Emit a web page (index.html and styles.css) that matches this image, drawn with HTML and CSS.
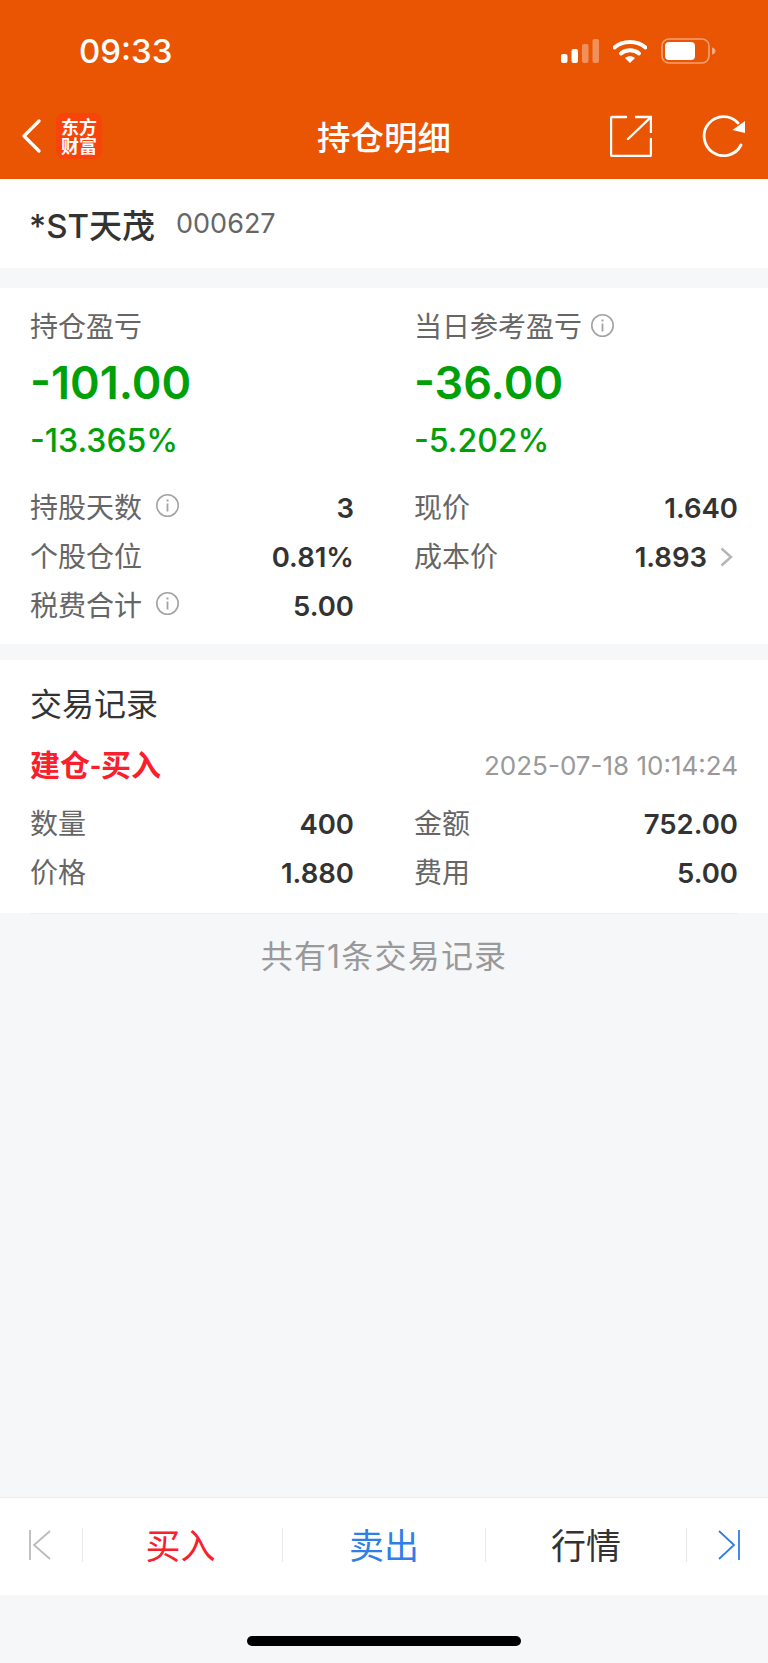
FILE: index.html
```html
<!DOCTYPE html>
<html lang="zh-CN">
<head>
    <meta charset="UTF-8">
    <meta name="viewport" content="width=device-width, initial-scale=1.0">
    <title>持仓明细</title>
    <link rel="stylesheet" href="styles.css">
</head>
<body>
    <div id="app">
        <!-- Header -->
        <header class="topbar">
            <div class="status-bar">
                <span class="clock">09:33</span>
                <div class="status-icons">
                    <svg class="signal" width="38" height="24" viewBox="0 0 38 24">
                        <rect x="0" y="15" width="6.5" height="9" rx="2" fill="#fff"/>
                        <rect x="10.500" y="10" width="6.5" height="14" rx="2" fill="#fff"/>
                        <rect x="21" y="5" width="6.5" height="19" rx="2" fill="#fff" opacity="0.35"/>
                        <rect x="31.500" y="0" width="6.5" height="24" rx="2" fill="#fff" opacity="0.35"/>
                    </svg>
                    <svg class="wifi" width="34" height="24" viewBox="0 0 34 24">
                        <path d="M1.500 8.500C9.800 1 24.200 1 32.500 8.500" fill="none" stroke="#fff" stroke-width="4" stroke-linecap="round"/>
                        <path d="M8 14.500C12.800 10.300 21.200 10.300 26 14.500" fill="none" stroke="#fff" stroke-width="4" stroke-linecap="round"/>
                        <path d="M12 19L17 24L22 19C19 16.500 15 16.500 12 19Z" fill="#fff"/>
                    </svg>
                    <svg class="battery" width="55" height="26" viewBox="0 0 55 26">
                        <rect x="1" y="1" width="47" height="24" rx="7" fill="none" stroke="#fff" stroke-width="1.600" opacity="0.45"/>
                        <rect x="4" y="4" width="30" height="18" rx="4" fill="#fff"/>
                        <path d="M51 9.500C53.500 10 54.500 11.500 54.500 13C54.500 14.500 53.500 16 51 16.500Z" fill="#fff" opacity="0.5"/>
                    </svg>
                </div>
            </div>
            <nav class="navbar">
                <div class="nav-left">
                    <svg class="back" width="20" height="34" viewBox="0 0 20 34">
                        <path d="M18 2L3 17L18 32" fill="none" stroke="#fff" stroke-width="3.200" stroke-linecap="round" stroke-linejoin="round"/>
                    </svg>
                    <div class="logo">东方<br>财富</div>
                </div>
                <h1>持仓明细</h1>
                <div class="nav-right">
                    <svg width="42" height="42" viewBox="0 0 42 42">
                        <path d="M16 2H2.500A1.500 1.500 0 0 0 1 3.500V39.500A1.500 1.500 0 0 0 2.500 41H39.500A1.500 1.500 0 0 0 41 39.500V24" fill="none" stroke="#fff" stroke-width="2.400" stroke-linecap="round"/>
                        <path d="M18 24L40 3" fill="none" stroke="#fff" stroke-width="2.400" stroke-linecap="round"/>
                        <path d="M25 2H41V18" fill="none" stroke="#fff" stroke-width="2.400"/>
                    </svg>
                    <svg width="44" height="42" viewBox="0 0 44 42">
                        <path d="M39 30A19.500 19.500 0 1 1 36 8" fill="none" stroke="#fff" stroke-width="2.800" stroke-linecap="round"/>
                        <path d="M43 6V18L30.500 15Z" fill="#fff"/>
                    </svg>
                </div>
            </nav>
        </header>

        <!-- Main Content -->
        <main>
            <section class="stock-title">
                <span class="stock-name">*ST天茂</span>
                <span class="stock-code">000627</span>
            </section>

            <section class="card summary">
                <div class="summary-block">
                    <div class="block-label">持仓盈亏</div>
                    <div class="big-number">-101.00</div>
                    <div class="percent">-13.365%</div>
                </div>
                <div class="summary-block">
                    <div class="block-label">当日参考盈亏
                        <svg class="info" width="23" height="23" viewBox="0 0 23 23"><use href="#info-icon"/></svg>
                    </div>
                    <div class="big-number">-36.00</div>
                    <div class="percent">-5.202%</div>
                </div>
                <div class="detail-list">
                    <div class="row">
                        <span class="label">持股天数
                            <svg class="info" width="23" height="23" viewBox="0 0 23 23"><use href="#info-icon"/></svg>
                        </span>
                        <span class="value">3</span>
                    </div>
                    <div class="row"><span class="label">个股仓位</span><span class="value">0.81%</span></div>
                    <div class="row">
                        <span class="label">税费合计
                            <svg class="info" width="23" height="23" viewBox="0 0 23 23"><use href="#info-icon"/></svg>
                        </span>
                        <span class="value">5.00</span>
                    </div>
                </div>
                <div class="detail-list">
                    <div class="row"><span class="label">现价</span><span class="value">1.640</span></div>
                    <div class="row">
                        <span class="label">成本价</span>
                        <span class="value">1.893
                            <svg class="more" width="13" height="20" viewBox="0 0 13 20">
                                <path d="M1.500 1.500L11 10L1.500 18.500" fill="none" stroke="#b5b5b5" stroke-width="2.400"/>
                            </svg>
                        </span>
                    </div>
                </div>
            </section>

            <section class="card trades">
                <h2>交易记录</h2>
                <div class="trade-head">
                    <span class="trade-type">建仓-买入</span>
                    <span class="trade-time">2025-07-18 10:14:24</span>
                </div>
                <div class="trade-grid">
                    <div class="row"><span class="label">数量</span><span class="value">400</span></div>
                    <div class="row"><span class="label">金额</span><span class="value">752.00</span></div>
                    <div class="row"><span class="label">价格</span><span class="value">1.880</span></div>
                    <div class="row"><span class="label">费用</span><span class="value">5.00</span></div>
                </div>
                <div class="divider"></div>
            </section>

            <p class="record-count">共有1条交易记录</p>
        </main>

        <!-- Bottom Actions -->
        <footer class="actions">
            <div class="action first">
                <svg width="22" height="30" viewBox="0 0 22 30">
                    <path d="M1 0V30M21 1L5 15L21 29" fill="none" stroke="#bbb" stroke-width="1.800"/>
                </svg>
            </div>
            <div class="action buy">买入</div>
            <div class="action sell">卖出</div>
            <div class="action quote">行情</div>
            <div class="action last">
                <svg width="22" height="30" viewBox="0 0 22 30">
                    <path d="M21 0V30M1 1L16 15L1 29" fill="none" stroke="#2f7fe8" stroke-width="1.800"/>
                </svg>
            </div>
        </footer>
        <div class="home-area"><div class="home-bar"></div></div>
    </div>

    <!-- Shared info glyph -->
    <svg class="defs" width="0" height="0">
        <symbol id="info-icon" viewBox="0 0 23 23">
            <circle cx="11.500" cy="11.500" r="10.700" fill="none" stroke="#a3a3a3" stroke-width="1.600"/>
            <rect x="10.600" y="9.500" width="1.800" height="8" fill="#a3a3a3"/>
            <rect x="10.500" y="5.500" width="2" height="2" fill="#a3a3a3"/>
        </symbol>
    </svg>
</body>
</html>
```

FILE: styles.css
```css
/* General Styles */
body {
    margin: 0;
    padding: 0;
    background-color: #f6f7f9;
    font-family: Inter, "Noto Sans CJK SC", sans-serif;
    color: #333;
}

h1, h2, p {
    margin: 0;
    font-weight: normal;
}

#app {
    display: flex;
    flex-direction: column;
    height: 1663px;
    overflow: hidden;
}

.defs {
    position: absolute;
}

/* Header */
.topbar {
    background-color: #ea5503;
    color: white;
    height: 179px;
}

.status-bar {
    display: flex;
    justify-content: space-between;
    align-items: center;
    height: 100px;
    padding: 2px 52px 0 79px;
    box-sizing: border-box;
}

.clock {
    font-size: 33px;
    font-weight: 500;
}

.status-icons {
    display: flex;
    align-items: center;
    gap: 14px;
}

.navbar {
    display: flex;
    justify-content: space-between;
    align-items: center;
    position: relative;
    height: 72px;
    padding: 0 22px 0 21px;
}

.nav-left {
    display: flex;
    align-items: center;
    gap: 15px;
}

.logo {
    width: 46px;
    height: 46px;
    border-radius: 8px;
    background-color: #f8440a;
    font-family: "Noto Sans CJK SC", sans-serif;
    font-size: 18px;
    font-weight: 700;
    line-height: 19px;
    text-align: center;
    padding-top: 4px;
    box-sizing: border-box;
}

.navbar h1 {
    position: absolute;
    left: 0;
    right: 0;
    text-align: center;
    font-family: "Noto Sans CJK SC", sans-serif;
    font-size: 33.500px;
    font-weight: 500;
    line-height: 44px;
}

.nav-right {
    display: flex;
    align-items: center;
    gap: 50px;
}

/* Stock Title */
.stock-title {
    display: flex;
    align-items: center;
    gap: 21px;
    height: 89px;
    padding-left: 29px;
    background: white;
}

.stock-name {
    font-size: 33px;
    font-weight: 500;
    color: #333;
}

.stock-code {
    font-size: 27px;
    color: #666;
}

/* Cards */
.card {
    background: white;
}

.summary {
    display: grid;
    grid-template-columns: 1fr 1fr;
    column-gap: 60px;
    margin-top: 20px;
    padding: 13px 30px 12px 30px;
    height: 356px;
    box-sizing: border-box;
}

.block-label {
    display: flex;
    align-items: center;
    gap: 9px;
    height: 52px;
    padding-bottom: 4px;
    box-sizing: border-box;
    font-size: 28px;
    color: #666;
}

.big-number {
    height: 60px;
    line-height: 60px;
    font-size: 45px;
    font-weight: 600;
    color: #00a008;
}

.percent {
    height: 56px;
    line-height: 56px;
    font-size: 32px;
    font-weight: 500;
    color: #00a008;
}

.detail-list {
    margin-top: 12px;
}

.row {
    display: flex;
    justify-content: space-between;
    align-items: center;
    height: 49px;
}

.label {
    display: flex;
    align-items: center;
    gap: 14px;
    padding-bottom: 4px;
    font-size: 28px;
    color: #666;
}

.value {
    display: flex;
    align-items: center;
    gap: 13px;
    font-size: 27.500px;
    font-weight: 600;
    color: #333;
}

.more {
    margin-right: 5px;
}

/* Trade Records */
.trades {
    margin-top: 16px;
    padding: 0 30px;
    height: 253px;
    box-sizing: border-box;
}

.trades h2 {
    height: 89px;
    line-height: 89px;
    font-size: 32px;
    color: #333;
}

.trade-head {
    display: flex;
    justify-content: space-between;
    align-items: center;
    height: 32px;
}

.trade-type {
    padding-bottom: 4px;
    font-size: 30px;
    font-weight: 700;
    font-family: "Noto Sans CJK SC", sans-serif;
    color: #f9202b;
}

.trade-time {
    font-size: 26px;
    color: #999;
}

.trade-grid {
    display: grid;
    grid-template-columns: 1fr 1fr;
    column-gap: 60px;
    margin-top: 18px;
}

.divider {
    height: 1px;
    margin-top: 16px;
    background-color: #eee;
}

.record-count {
    margin-top: 24px;
    text-align: center;
    font-size: 32px;
    letter-spacing: 1.200px;
    line-height: 40px;
    color: #999;
}

main {
    flex: 1;
}

/* Bottom Actions */
.actions {
    display: grid;
    grid-template-columns: 82px 200px 203px 201px 82px;
    height: 98px;
    border-top: 1px solid #eee;
    background: white;
    box-sizing: border-box;
}

.action {
    display: flex;
    justify-content: center;
    align-items: center;
    height: 34px;
    margin-top: 30px;
    padding-bottom: 4px;
    font-family: "Noto Sans CJK SC", sans-serif;
    font-size: 35px;
    border-left: 1px solid #e8e8e8;
    box-sizing: border-box;
}

.action.first {
    border-left: none;
    padding: 0 2px 0 0;
}

.action.last {
    padding: 0 0 0 3px;
}

.buy {
    color: #f9202b;
    padding-right: 4px;
}

.sell {
    color: #2f7fe8;
}

.quote {
    color: #333;
}

.home-area {
    display: flex;
    justify-content: center;
    height: 68px;
    padding-top: 41px;
    box-sizing: border-box;
}

.home-bar {
    width: 274px;
    height: 10px;
    border-radius: 5px;
    background: black;
}
```
